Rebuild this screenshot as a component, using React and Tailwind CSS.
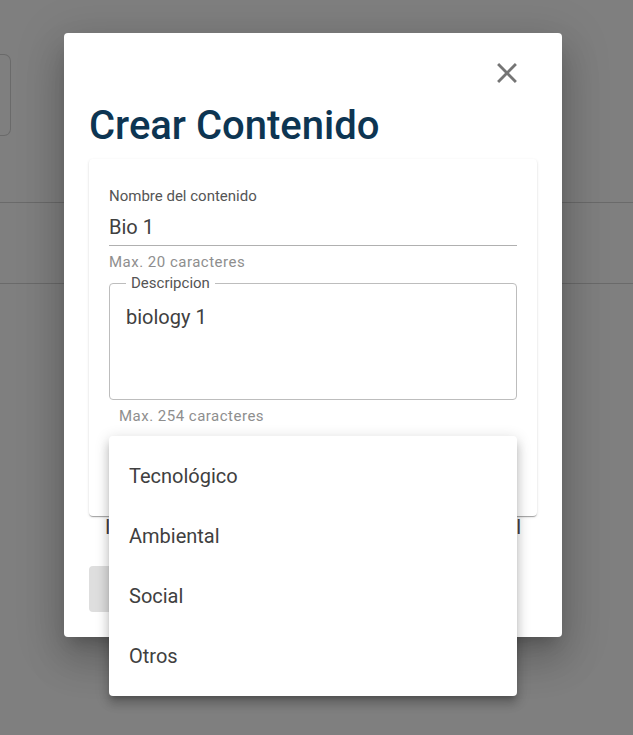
import React from 'react';

const font = { fontFamily: 'Roboto, "Noto Sans", sans-serif' };

const categorias = ['Tecnológico', 'Ambiental', 'Social', 'Otros'];

const CloseIcon = () => (
  <svg viewBox="0 0 24 24" className="w-[34px] h-[34px] block" fill="#757575">
    <path d="M19 6.41 17.59 5 12 10.59 6.41 5 5 6.41 10.59 12 5 17.59 6.41 19 12 13.41 17.59 19 19 17.59 13.41 12z" />
  </svg>
);

const App = () => {
  return (
    <div className="relative w-full h-[735px] overflow-hidden bg-white" style={font}>
      {/* page behind the backdrop */}
      <div className="flex flex-col pt-[54px]">
        <div className="w-[11px] h-[82px] border-y border-r border-[#d4d4d4] rounded-r-[7px]" />
        <div className="mt-[66px] h-px bg-[#d4d4d4]" />
        <div className="mt-[80px] h-px bg-[#d4d4d4]" />
      </div>

      <div className="absolute inset-0 bg-black/50" />

      {/* dialog */}
      <div className="absolute left-[64px] top-[33px] w-[498px] bg-white rounded-[4px] px-[25px] pt-[23px] pb-[25px] flex flex-col shadow-[0px_11px_15px_-7px_rgba(0,0,0,0.2),0px_24px_38px_3px_rgba(0,0,0,0.14),0px_9px_46px_8px_rgba(0,0,0,0.12)]">
        <div className="flex justify-end mr-[13px]">
          <button className="block">
            <CloseIcon />
          </button>
        </div>
        <h2 className="mt-[12px] text-[40px] leading-[48px] text-[#0d3552] font-medium">Crear Contenido</h2>

        <div className="mt-[9px] bg-white rounded-[4px] px-[20px] pt-[28px] pb-[25px] shadow-[0px_2px_1px_-1px_rgba(0,0,0,0.2),0px_1px_1px_0px_rgba(0,0,0,0.14),0px_1px_3px_0px_rgba(0,0,0,0.12)]">
          <div className="text-[15px] leading-[18px] text-[#555]">Nombre del contenido</div>
          <div className="mt-[10px] pb-[6px] border-b border-[#b0b0b0] text-[20px] leading-[24px] text-[#404040]">Bio 1</div>
          <div className="mt-[7px] text-[15px] leading-[18px] tracking-[0.033em] text-[#8e8e8e]">Max. 20 caracteres</div>

          <fieldset className="mt-[3px] border border-[#bdbdbd] rounded-[4px] pl-[16px] pr-[14px] pb-0">
            <legend className="px-[5px] text-[15px] leading-[18px] text-[#555]">Descripcion</legend>
            <div className="pt-[13px] h-[107px] text-[20px] leading-[24px] text-[#404040]">biology 1</div>
          </fieldset>
          <div className="mt-[7px] ml-[10px] text-[15px] leading-[18px] tracking-[0.033em] text-[#8e8e8e]">Max. 254 caracteres</div>

          <div className="mt-[10px] h-[56px] border-b border-[#b0b0b0]" />
        </div>

        <div className="flex justify-between px-[16px] text-[20px] leading-[23px] text-[#404040]">
          <span>Imagen de portada</span>
          <span>Opcional</span>
        </div>

        <button className="mt-[27px] w-[160px] h-[46px] rounded-[4px] bg-[#dedede] text-[#a6a6a6] text-[16px] uppercase">
          Crear
        </button>
      </div>

      {/* open select menu */}
      <ul className="absolute left-[109px] top-[436px] w-[408px] bg-white rounded-[4px] py-[10px] shadow-[0px_5px_5px_-3px_rgba(0,0,0,0.2),0px_8px_10px_1px_rgba(0,0,0,0.14),0px_3px_14px_2px_rgba(0,0,0,0.12)]">
        {categorias.map(c => (
          <li key={c} className="px-[20px] py-[15px] text-[20px] leading-[30px] text-[#404040]">
            {c}
          </li>
        ))}
      </ul>
    </div>
  );
};

export default App;
